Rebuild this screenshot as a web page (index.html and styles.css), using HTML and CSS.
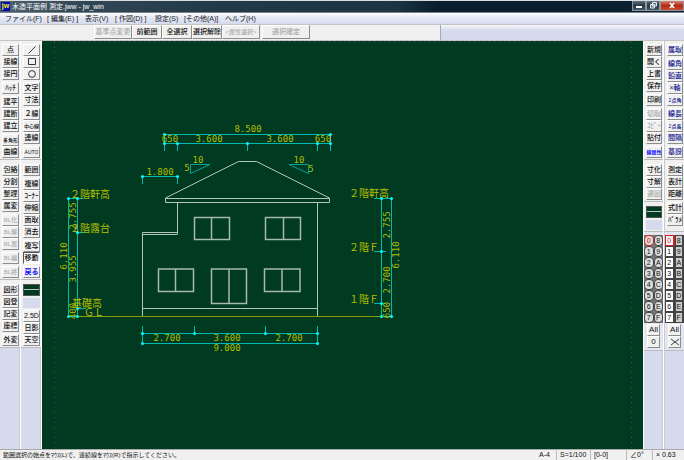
FILE: index.html
```html
<!DOCTYPE html>
<html lang="ja">
<head>
<meta charset="utf-8">
<title>木造平面例 測定.jww - jw_win</title>
<link rel="stylesheet" href="styles.css">
</head>
<body>
<header class="titlebar">
  <span class="app-icon">jw</span>
  <span class="title">木造平面例 測定.jww - jw_win</span>
  <div class="window-buttons">
    <button type="button" aria-label="最小化"><svg width="12" height="9" viewBox="0 0 12 9"><path d="M3 5h6v2H3z" fill="#fff"/></svg></button>
    <button type="button" aria-label="元に戻す"><svg width="12" height="9" viewBox="0 0 12 9"><path d="M5.500 1.500h4v3.500h-4zM3.500 3.500h4v3.500h-4z" fill="#66737e" stroke="#e6ebef"/></svg></button>
    <button type="button" class="close" aria-label="閉じる"><svg width="12" height="9" viewBox="0 0 12 9"><path d="M4 2l4 5M8 2L4 7" stroke="#fff" stroke-width="1.600"/></svg></button>
  </div>
</header>
<nav class="menubar">
  <a href="#">ファイル(F)</a><a href="#">[ 編集(E) ]</a><a href="#">表示(V)</a><a href="#">[ 作図(D) ]</a><a href="#">設定(S)</a><a href="#">[その他(A)]</a><a href="#">ヘルプ(H)</a>
</nav>
<div class="controlbar">
  <div class="controls">
    <button type="button" class="wide" disabled>基準点変更</button>
    <button type="button">前範囲</button>
    <button type="button">全選択</button>
    <button type="button">選択解除</button>
    <button type="button" class="wide small" disabled>&lt;属性選択&gt;</button>
    <button type="button" class="confirm" disabled>選択確定</button>
  </div>
</div>
<main class="workspace">
  <aside class="dock">
    <div class="column">
      <section class="tools">
        <div><button type="button">点</button><button type="button">接線</button><button type="button">接円</button></div>
        <div><button type="button">ﾊｯﾁ</button></div>
        <div><button type="button">建平</button><button type="button">建断</button><button type="button">建立</button></div>
        <div><button type="button" class="tiny">多角形</button><button type="button">曲線</button></div>
      </section>
      <section class="tools">
        <div><button type="button">包絡</button><button type="button">分割</button><button type="button">整理</button><button type="button">属変</button></div>
        <div><button type="button" class="small" disabled>BL化</button><button type="button" class="small" disabled>BL解</button><button type="button" class="small" disabled>BL属</button></div>
        <div><button type="button" class="small" disabled>BL編</button></div>
        <div><button type="button" class="small" disabled>BL終</button></div>
      </section>
      <section class="tools">
        <div><button type="button">図形</button><button type="button">図登</button><button type="button">記変</button><button type="button">座標</button></div>
        <div><button type="button">外変</button></div>
      </section>
    </div>
    <div class="column">
      <section class="tools">
        <div>
          <button type="button" aria-label="線"><svg width="10" height="8" viewBox="0 0 10 8"><path d="M1.500 7.500l7-7" stroke="#333"/></svg></button>
          <button type="button" aria-label="矩形"><svg width="10" height="8" viewBox="0 0 10 8"><path d="M1.500 0.500h7v6h-7z" stroke="#333" fill="none"/></svg></button>
          <button type="button" aria-label="円"><svg width="10" height="8" viewBox="0 0 10 8"><circle cx="5" cy="4" r="3.400" stroke="#333" fill="none"/></svg></button>
        </div>
        <div><button type="button">文字</button><button type="button">寸法</button></div>
        <div><button type="button">２線</button><button type="button" class="tiny">中心線</button><button type="button">連線</button></div>
        <div><button type="button" class="tiny">AUTO</button></div>
      </section>
      <section class="tools">
        <div><button type="button">範囲</button></div>
        <div><button type="button">複線</button><button type="button">ｺｰﾅｰ</button><button type="button">伸縮</button><button type="button">面取</button><button type="button">消去</button></div>
        <div><button type="button">複写</button><button type="button" class="pressed">移動</button></div>
        <div><button type="button" class="blue">戻る</button></div>
      </section>
      <section class="tools">
        <button type="button" class="linetype" aria-label="線属性"></button>
        <span class="spacer"></span>
        <div><button type="button">2.5D</button><button type="button">日影</button><button type="button">天空</button></div>
      </section>
    </div>
  </aside>

  <div class="canvas">
    <svg class="drawing" viewBox="42 41 601 408" role="img" aria-label="立面図">
      <g class="paper">
        <path d="M54.500 42V449M631.500 42V449"/>
        <path d="M54 41.500H632"/>
      </g>
      <path class="ground" d="M68 316.500H392"/>
      <g class="house">
        <path d="M165.500 198L238.500 161.500H256.500L329.500 198"/>
        <path d="M165.500 198.500H329.500V202.500H165.500Z"/>
        <path d="M177.500 202V234M317.500 202V316"/>
        <path d="M177.500 232.500H142.500V316M142.500 234.500H177.500M142.500 308.500H317.500"/>
        <g class="window">
          <path d="M194.500 217.500h35v22h-35zM211.500 217.500v22"/>
          <path d="M265.500 217.500h35v22h-35zM283.500 217.500v22"/>
          <path d="M158.500 269h35v22.500h-35zM175.500 269v22.500"/>
          <path d="M211.500 269h35v34.500h-35zM229 269v34.500"/>
          <path d="M264.500 269h35.500v22.500h-35.500zM282 269v22.500"/>
        </g>
      </g>
      <g class="dimension">
        <path d="M164.500 151V134.500H330.500V151M164.500 143.500H330.500M177.500 143.500V151M247.500 143.500V151M317.500 143.500V151"/>
        <path d="M142.500 184V176.500H177.500V184"/>
        <path d="M84 198.500H68.500V316.500H77.500V198.500M77.500 232.500H85M77.500 308.500H86"/>
        <path d="M374 198.500H391.500V316.500H381.500V198.500M374 251.500H386M374 303.500H386"/>
        <path d="M142.500 326V343.500H317.500V326M142.500 333.500H317.500M194.500 326V333.500M265.500 326V333.500"/>
      </g>
      <path class="slope" d="M190.500 164.500H210L190.500 173.500ZM289 164.500H308.500V173.500Z"/>
      <path class="nodes" d="M164.500 134.500h0M330.500 134.500h0M164.500 143.500h0M177.500 143.500h0M247.500 143.500h0M317.500 143.500h0M330.500 143.500h0M142.500 176.500h0M177.500 176.500h0M68.500 198.500h0M77.500 198.500h0M77.500 232.500h0M77.500 308.500h0M68.500 316.500h0M77.500 316.500h0M381.500 198.500h0M391.500 198.500h0M381.500 251.500h0M381.500 303.500h0M381.500 316.500h0M391.500 316.500h0M142.500 333.500h0M194.500 333.500h0M265.500 333.500h0M317.500 333.500h0M142.500 343.500h0M317.500 343.500h0"/>
      <g class="figures">
        <text x="248" y="132">8.500</text>
        <text x="170" y="142">650</text>
        <text x="209" y="142">3.600</text>
        <text x="280" y="142">3.600</text>
        <text x="323" y="142">650</text>
        <text x="160" y="175">1.800</text>
        <text x="198" y="163">10</text>
        <text x="187" y="171">5</text>
        <text x="299" y="163">10</text>
        <text x="311" y="172">5</text>
        <text x="167" y="341">2.700</text>
        <text x="227" y="341">3.600</text>
        <text x="289" y="341">2.700</text>
        <text x="227" y="351">9.000</text>
        <text transform="translate(76 216) rotate(-90)">2.755</text>
        <text transform="translate(67 256) rotate(-90)">6.110</text>
        <text transform="translate(76 269) rotate(-90)">3.955</text>
        <text transform="translate(76 311) rotate(-90)">400</text>
        <text transform="translate(390 225) rotate(-90)">2.755</text>
        <text transform="translate(390 280) rotate(-90)">2.700</text>
        <text transform="translate(390 310) rotate(-90)">650</text>
        <text transform="translate(399 255) rotate(-90)">6.110</text>
      </g>
      <g class="levels">
        <text x="70" y="198">２階軒高</text>
        <text x="70" y="232">２階露台</text>
        <text x="72" y="307">基礎高</text>
        <text x="84" y="316">ＧＬ</text>
        <text x="349" y="197">２階軒高</text>
        <text x="349" y="251">２階Ｆ</text>
        <text x="349" y="303">１階Ｆ</text>
      </g>
    </svg>
  </div>

  <aside class="dock right">
    <div class="column">
      <section class="tools">
        <div><button type="button">新規</button><button type="button">開く</button><button type="button">上書</button><button type="button">保存</button></div>
        <div><button type="button">印刷</button></div>
        <div><button type="button" disabled>切取</button><button type="button" disabled>ｺﾋﾟｰ</button><button type="button">貼付</button></div>
        <div><button type="button" class="blue tiny">線属性</button></div>
      </section>
      <section class="tools">
        <div><button type="button">寸化</button><button type="button">寸解</button><button type="button" disabled>選図</button></div>
      </section>
      <section class="tools">
        <button type="button" class="linetype" aria-label="線属性"></button>
        <span class="spacer"></span>
      </section>
      <section class="layers rounded">
        <div class="grid">
          <button type="button" class="current">0</button><button type="button">8</button>
          <button type="button">1</button><button type="button">9</button>
          <button type="button">2</button><button type="button">A</button>
          <button type="button">3</button><button type="button">B</button>
          <button type="button">4</button><button type="button">C</button>
          <button type="button">5</button><button type="button">D</button>
          <button type="button">6</button><button type="button">E</button>
          <button type="button">7</button><button type="button">F</button>
        </div>
        <div class="layer-commands"><button type="button">All</button><button type="button">0</button></div>
      </section>
    </div>
    <div class="column">
      <section class="tools navy">
        <div><button type="button">属取</button></div>
        <div><button type="button">線角</button><button type="button">鉛直</button><button type="button">×軸</button><button type="button" class="tiny">2点角</button></div>
        <div><button type="button">線長</button><button type="button" class="tiny">2点長</button><button type="button">間隔</button></div>
        <div><button type="button">基設</button></div>
      </section>
      <section class="tools last">
        <div><button type="button">測定</button><button type="button">表計</button><button type="button">距離</button></div>
        <div><button type="button">式計</button><button type="button">ﾊﾟﾗﾒ</button></div>
      </section>
      <section class="layers">
        <div class="grid">
          <button type="button" class="current">0</button><button type="button">8</button>
          <button type="button">1</button><button type="button">9</button>
          <button type="button">2</button><button type="button">A</button>
          <button type="button">3</button><button type="button">B</button>
          <button type="button">4</button><button type="button">C</button>
          <button type="button">5</button><button type="button">D</button>
          <button type="button">6</button><button type="button">E</button>
          <button type="button">7</button><button type="button">F</button>
        </div>
        <div class="layer-commands"><button type="button">All</button><button type="button" aria-label="解除"><svg width="10" height="8" viewBox="0 0 10 8"><path d="M1 1l8 6M9 1L1 7" stroke="#444"/></svg></button></div>
      </section>
    </div>
  </aside>
</main>
<footer class="statusbar">
  <span class="message">範囲選択の始点をﾏｳｽ(L)で、連続線をﾏｳｽ(R)で指示してください。</span>
  <span>A-4</span><span>S=1/100</span><span>[0-0]</span><span>∠0°</span><span>× 0.63</span>
</footer>
</body>
</html>
```

FILE: styles.css
```css
* { box-sizing: border-box; }

body {
  margin: 0;
  min-height: 100vh;
  display: flex;
  flex-direction: column;
  background: #d5daec;
  color: #111;
  font: 7px/10px "Liberation Sans", "Noto Sans CJK JP", sans-serif;
}

button {
  margin: 0;
  padding: 0;
  border: 1px solid;
  border-color: #fff #8c8c8c #8c8c8c #fff;
  background: #f0f0f0;
  color: #111;
  font: inherit;
  font-weight: 500;
  white-space: nowrap;
  display: flex;
  align-items: center;
  justify-content: center;
}
button:disabled { color: #aaa; }

/* Title bar */
.titlebar {
  height: 13px;
  padding-left: 1px;
  display: flex;
  align-items: center;
  gap: 2px;
  border-top: 1px solid #d8dde0;
  border-bottom: 1px solid #76828c;
  background: linear-gradient(90deg, #50626f 0, #344957 10%, #233a48 30%, #1c3443 58%, #081d2e 64%, #0a2132 100%);
  color: #fff;
}
.app-icon {
  width: 9px;
  height: 9px;
  background: #0010a8;
  color: #ffef20;
  font-weight: bold;
  line-height: 8px;
  text-align: center;
}
.title { flex: 1; }
.window-buttons { display: flex; align-self: flex-start; }
.window-buttons button {
  width: 14px;
  height: 10px;
  border: 1px solid #8b969e;
  border-top: 0;
  background: linear-gradient(#62717d, #263846 50%, #465764);
}
.window-buttons .close {
  width: 24px;
  background: linear-gradient(#d28878, #b52b15 50%, #c64a30);
}

/* Menu */
.menubar {
  height: 11px;
  padding-left: 5px;
  display: grid;
  grid-template-columns: 42px 38px 30px 40px 29px 41px auto;
  align-items: center;
  background: linear-gradient(#fff, #e4e9f5 40%, #d5dcee);
}
.menubar a { color: #222; text-decoration: none; white-space: nowrap; }

/* Control bar */
.controlbar {
  height: 17px;
  display: flex;
  border-top: 1px solid #c4c4c4;
  border-bottom: 1px solid #c4c4c4;
  background: linear-gradient(#f4f6fb, #d5daec 40%);
}
.controls {
  flex: 0 0 65%;
  max-width: 441px;
  padding: 0 0 1px 94px;
  display: flex;
  background: #f0f0f0;
  border-right: 1px solid #aaa;
}
.controls button { flex: 0 0 30px; }
.controls .wide { flex-basis: 38px; }
.controls .confirm { flex-basis: 48px; margin-left: 2px; }

/* Docks */
.workspace { flex: 1; display: flex; }
.dock { flex: none; display: flex; }
.dock.right { border-left: 1px solid #fff; }
.column {
  width: 21px;
  border-right: 1px solid #fff;
  box-shadow: inset -1px 0 #c9cbd2;
}
.right .column { width: 20px; }
.right .column + .column { box-shadow: none; border-right: 0; border-left: 1px solid #c9cbd2; }

.tools {
  padding: 4px 1px 1px 2px;
  display: flex;
  flex-direction: column;
  gap: 2px;
  background: #f0f0f0;
  border-bottom: 1px solid #bbb;
}
.tools:first-child { padding-top: 3px; }
.tools.last { padding-bottom: 5px; }
.tools button { width: 100%; height: 12px; }
.tools .pressed { border-color: #555 #fff #fff #555; background: #fafafa; }
.tools .blue { color: #1010ff; font-weight: bold; }
.small { font-size: 6px; }
.tiny { font-size: 5px; }
.navy button { color: #10108c; }
.tools .linetype {
  border: 1px solid #555;
  background: linear-gradient(#003a20 4px, #b8c8c0 4px, #b8c8c0 5px, #003a20 5px);
}
.spacer { height: 10px; background: #d5daec; }

/* Layer bars */
.layers { background: #e3e6f0; padding: 3px 0 2px; border-bottom: 1px solid #bbb; }
.grid {
  display: grid;
  grid-template-columns: 1fr 1fr;
  grid-auto-rows: 11px;
  background: #444;
}
.grid button { border: 1px solid #444; border-right-width: 2px; background: #ccc; }
.grid button:nth-child(odd) { background: #fff; }
.rounded .grid { background: #777; }
.rounded .grid button { border: 1px solid #444; border-radius: 4px; background: #ddd; }
.grid button.current, .rounded .grid button.current { border-color: #d02020; color: #c01010; }
.layer-commands { padding: 0 3px; margin-top: 1px; }
.layer-commands button { width: 100%; height: 12px; font-size: 8px; }

/* Drawing */
.canvas { flex: 1; min-width: 0; background: #003a20; display: flex; }
.drawing { width: 100%; min-width: 0; flex: 1; fill: none; shape-rendering: crispEdges; }
.paper { stroke: #6d3474; stroke-dasharray: 1 4; }
.ground { stroke: #8c9c08; }
.house { stroke: #b4c6bb; shape-rendering: auto; }
.window { stroke: #a6b9ad; stroke-width: 1.5; }
.dimension { stroke: #00b8b0; }
.slope { stroke: #00a398; shape-rendering: auto; }
.nodes { stroke: #00ffff; stroke-width: 3; stroke-linecap: round; shape-rendering: auto; }
.figures { fill: #b3bd00; font: 9px "DejaVu Sans Mono", monospace; text-anchor: middle; }
.levels { fill: #b3bd00; font: 10px "Noto Sans CJK JP", sans-serif; }

/* Status bar */
.statusbar {
  height: 11px;
  padding-left: 3px;
  display: grid;
  grid-template-columns: 1fr 20px 34px 36px 26px 32px;
  align-items: center;
  background: #f0f0f0;
  border-top: 1px solid #aaa;
}
.statusbar span { padding-left: 3px; white-space: nowrap; }
.statusbar span + span + span { border-left: 1px solid #bbb; }
.statusbar .message { padding-left: 0; font-size: 6px; }
```
